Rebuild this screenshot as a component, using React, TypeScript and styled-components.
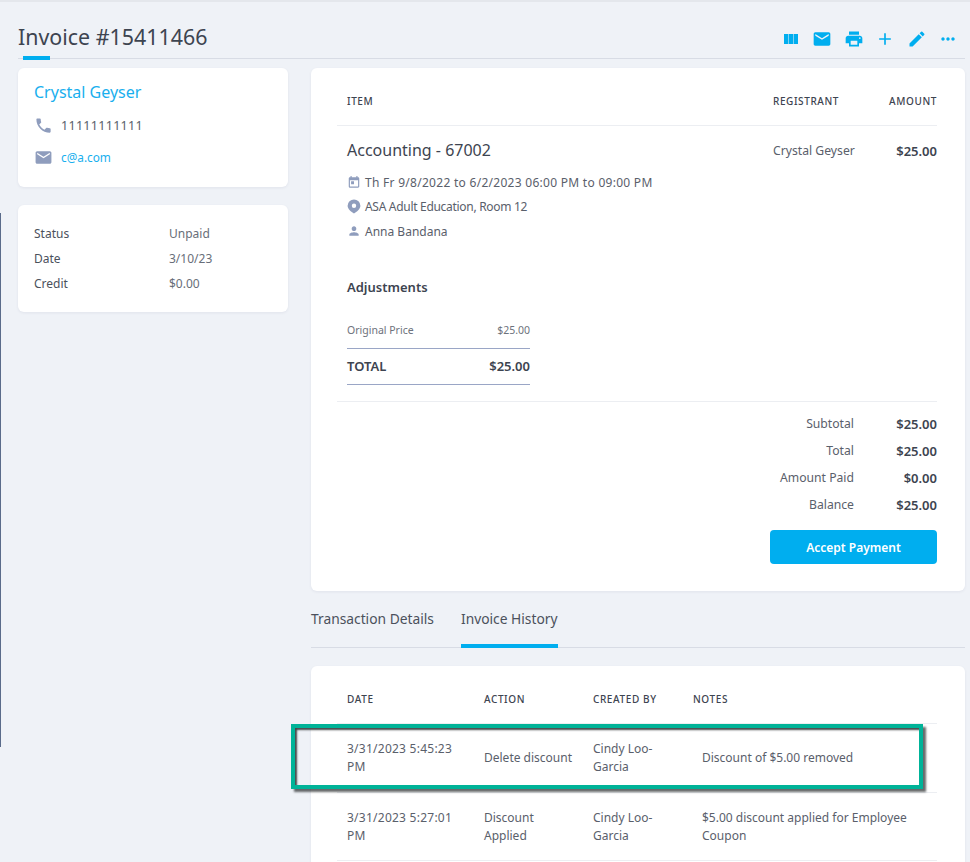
import styled, { createGlobalStyle } from 'styled-components';
import {
  MdEmail,
  MdPrint,
  MdAdd,
  MdEdit,
  MdMoreHoriz,
  MdPhone,
  MdToday,
  MdPerson,
} from 'react-icons/md';

const GlobalStyle = createGlobalStyle`
  html, body {
    margin: 0;
    padding: 0;
    background: #eff2f7;
    font-family: "Noto Sans", "Open Sans", sans-serif;
    color: #3e4550;
  }
  #root {
    height: 862px;
    overflow: hidden;
  }
`;

const Page = styled.div`
  position: relative;
  box-sizing: border-box;
  width: 970px;
  height: 862px;
  overflow: hidden;
  border-top: 2px solid #e4e7ec;
  padding: 0 5px 0 18px;
`;

const SideStripe = styled.div`
  position: absolute;
  left: 0;
  top: 211px;
  width: 1px;
  height: 534px;
  background: #5a6b8a;
`;

const Header = styled.div`
  position: relative;
  display: flex;
  align-items: center;
  justify-content: space-between;
  height: 57px;
  box-sizing: border-box;
  padding: 14px 7px 0 0;
  border-bottom: 1px solid #d8dce5;
`;

const HeaderAccent = styled.div`
  position: absolute;
  left: 5px;
  bottom: -2px;
  width: 27px;
  height: 4px;
  background: #00aeef;
`;

const Title = styled.h1`
  margin: 0;
  font-size: 21.4px;
  font-weight: 400;
  color: #3d4450;
  line-height: 30px;
`;

const Toolbar = styled.div`
  display: flex;
  align-items: center;
  gap: 11.5px;
  margin-top: 3px;
  color: #00aeef;
  font-size: 20px;

  & > svg {
    display: block;
  }
`;

const Columns = styled.div`
  display: grid;
  grid-template-columns: 270px 654px;
  column-gap: 23px;
  margin-top: 9px;
`;

const Stack = styled.div`
  display: flex;
  flex-direction: column;
`;

const Card = styled.div<{ $height: number; $gap?: number }>`
  box-sizing: border-box;
  height: ${(p) => p.$height}px;
  margin-bottom: ${(p) => p.$gap ?? 0}px;
  background: #fff;
  border-radius: 6px;
  box-shadow: 0 1px 3px rgba(60, 70, 100, 0.08);
`;

const ContactCard = styled(Card)`
  padding: 14px 16px;
`;

const ContactName = styled.div`
  font-size: 16px;
  line-height: 21px;
  color: #19afee;
  margin-bottom: 6px;
`;

const ContactRow = styled.div`
  display: flex;
  align-items: center;
  height: 32px;
  gap: 8px;
  font-size: 12.5px;
  letter-spacing: 0.3px;
  color: #5a606b;

  & > svg {
    flex: none;
    color: #8f9dbd;
    font-size: 19px;
  }
`;

const ContactLink = styled.span`
  color: #19afee;
  font-size: 11.8px;
  letter-spacing: 0;
`;

const InfoCard = styled(Card)`
  padding: 16px 16px;
`;

const InfoRow = styled.div`
  display: grid;
  grid-template-columns: 135px 1fr;
  height: 25px;
  align-items: center;
  font-size: 12px;
  color: #4b515c;
`;

const InfoValue = styled.span`
  color: #686e79;
`;

const InvoiceCard = styled(Card)`
  padding: 0 28px 0 26px;
`;

const ItemHead = styled.div`
  display: grid;
  grid-template-columns: 1fr 100px 64px;
  align-items: center;
  height: 58px;
  padding: 8px 0 0 10px;
  box-sizing: border-box;
  border-bottom: 1px solid #eceef2;
`;

const HeadLabel = styled.div<{ $right?: boolean }>`
  font-size: 10px;
  font-weight: 500;
  letter-spacing: 0.6px;
  color: #3d4450;
  text-align: ${(p) => (p.$right ? 'right' : 'left')};
`;

const ItemBody = styled.div`
  display: grid;
  grid-template-columns: 1fr 100px 64px;
  height: 276px;
  box-sizing: border-box;
  padding: 12px 0 0 10px;
  border-bottom: 1px solid #eceef2;
`;

const ItemName = styled.div`
  font-size: 16px;
  line-height: 24px;
  color: #3d4450;
  margin-bottom: 8px;
`;

const ItemMeta = styled.div<{ $spacing?: number }>`
  display: flex;
  align-items: center;
  gap: 4px;
  height: 24.5px;
  font-size: 12px;
  letter-spacing: ${(p) => p.$spacing ?? 0}px;
  color: #5a606b;
`;

const MetaIcon = styled.span`
  display: flex;
  flex: none;
  align-items: center;
  justify-content: center;
  width: 14px;
  color: #8f9dbd;
`;

const SectionTitle = styled.div`
  margin-top: 33px;
  font-size: 13px;
  line-height: 20px;
  font-weight: 600;
  color: #3d4450;
`;

const Adjustments = styled.div`
  width: 183px;
  margin-top: 15px;
`;

const AdjustRow = styled.div<{ $total?: boolean }>`
  display: flex;
  align-items: center;
  justify-content: space-between;
  height: ${(p) => (p.$total ? 36 : 37)}px;
  box-sizing: border-box;
  border-bottom: 1px solid #9aa6c6;
  font-size: ${(p) => (p.$total ? 13 : 10.5)}px;
  font-weight: ${(p) => (p.$total ? 600 : 400)};
  color: ${(p) => (p.$total ? '#3d4450' : '#6d727c')};
`;

const RegistrantCell = styled.div`
  font-size: 12.2px;
  line-height: 26px;
  color: #5a606b;
`;

const AmountCell = styled.div`
  font-size: 13px;
  line-height: 26px;
  font-weight: 600;
  color: #3d4450;
  text-align: right;
`;

const Totals = styled.div`
  display: flex;
  flex-direction: column;
  align-items: flex-end;
  padding-top: 8px;
`;

const TotalRow = styled.div`
  display: grid;
  grid-template-columns: 120px 83px;
  height: 27px;
  align-items: center;
  text-align: right;
`;

const TotalLabel = styled.span`
  font-size: 12.2px;
  color: #5a606b;
`;

const TotalValue = styled.span`
  font-size: 13px;
  font-weight: 600;
  color: #3d4450;
`;

const PayButton = styled.button`
  width: 167px;
  height: 34px;
  margin-top: 12px;
  border: 0;
  border-radius: 4px;
  background: #00aeef;
  color: #fff;
  font-family: inherit;
  font-size: 12px;
  font-weight: 600;
`;

const Tabs = styled.div`
  display: flex;
  gap: 27px;
  height: 57px;
  box-sizing: border-box;
  border-bottom: 1px solid #d8dce5;
`;

const Tab = styled.div<{ $active?: boolean }>`
  box-sizing: border-box;
  height: 57px;
  padding-top: 18px;
  font-size: 13.8px;
  line-height: 20px;
  color: #4b515c;
  border-bottom: ${(p) => (p.$active ? '4px solid #00aeef' : '0')};
`;

const HistoryCard = styled(Card)`
  margin-top: 18px;
  padding: 0 28px 0 26px;
`;

const HistoryRow = styled.div<{ $height: number }>`
  display: grid;
  grid-template-columns: 137px 109px 100px 1fr;
  align-items: center;
  height: ${(p) => p.$height}px;
  box-sizing: border-box;
  padding-left: 10px;
  border-bottom: 1px solid #eceef2;
`;

const HistoryHead = styled(HistoryRow)`
  padding-top: 9px;
`;

const HistoryCell = styled.div<{ $notes?: boolean; $spacing?: number }>`
  font-size: 12px;
  line-height: 18px;
  letter-spacing: ${(p) => p.$spacing ?? 0}px;
  color: #5a606b;
  padding-right: ${(p) => (p.$notes ? 0 : 20)}px;
  margin-left: ${(p) => (p.$notes ? 9 : 0)}px;
`;

const Callout = styled.div`
  position: absolute;
  left: 291px;
  top: 722px;
  width: 632px;
  height: 65px;
  box-sizing: border-box;
  border: 4px solid #00b398;
  box-shadow: inset 2px 2px 2px #45494a, 3px 3px 2px rgba(40, 44, 46, 0.7);
`;

function WeekIcon() {
  return (
    <svg width="20" height="20" viewBox="0 0 20 20" fill="currentColor">
      <rect x="3" y="5" width="4.4" height="10" />
      <rect x="7.9" y="5" width="4.2" height="10" />
      <rect x="12.6" y="5" width="4.4" height="10" />
    </svg>
  );
}

function PinIcon() {
  return (
    <svg width="14" height="15" viewBox="0 0 14 15">
      <path
        fill="currentColor"
        fillRule="evenodd"
        d="M7 .5a6.4 6.4 0 0 1 6.4 6.3c0 3.2-3.6 6.2-6.4 7.7C4.200 13 .6 10 .6 6.800A6.400 6.400 0 0 1 7 .5zm0 4.100a2.200 2.200 0 1 0 0 4.400 2.200 2.200 0 0 0 0-4.400z"
      />
    </svg>
  );
}

const history = [
  {
    date: '3/31/2023 5:45:23 PM',
    action: 'Delete discount',
    by: 'Cindy Loo-Garcia',
    notes: 'Discount of $5.00 removed',
    height: 69,
  },
  {
    date: '3/31/2023 5:27:01 PM',
    action: 'Discount Applied',
    by: 'Cindy Loo-Garcia',
    notes: '$5.00 discount applied for Employee Coupon',
    height: 68,
  },
];

const totals = [
  ['Subtotal', '$25.00'],
  ['Total', '$25.00'],
  ['Amount Paid', '$0.00'],
  ['Balance', '$25.00'],
];

function App() {
  return (
    <>
      <GlobalStyle />
      <Page>
        <SideStripe />
        <Header>
          <Title>Invoice #15411466</Title>
          <HeaderAccent />
          <Toolbar>
            <WeekIcon />
            <MdEmail />
            <MdPrint />
            <MdAdd />
            <MdEdit />
            <MdMoreHoriz />
          </Toolbar>
        </Header>
        <Columns>
          <Stack>
            <ContactCard $height={119} $gap={18}>
              <ContactName>Crystal Geyser</ContactName>
              <ContactRow>
                <MdPhone />
                11111111111
              </ContactRow>
              <ContactRow>
                <MdEmail />
                <ContactLink>c@a.com</ContactLink>
              </ContactRow>
            </ContactCard>
            <InfoCard $height={107}>
              <InfoRow>
                Status<InfoValue>Unpaid</InfoValue>
              </InfoRow>
              <InfoRow>
                Date<InfoValue>3/10/23</InfoValue>
              </InfoRow>
              <InfoRow>
                Credit<InfoValue>$0.00</InfoValue>
              </InfoRow>
            </InfoCard>
          </Stack>
          <Stack>
            <InvoiceCard $height={523}>
              <ItemHead>
                <HeadLabel>ITEM</HeadLabel>
                <HeadLabel>REGISTRANT</HeadLabel>
                <HeadLabel $right>AMOUNT</HeadLabel>
              </ItemHead>
              <ItemBody>
                <div>
                  <ItemName>Accounting - 67002</ItemName>
                  <ItemMeta $spacing={0.28}>
                    <MetaIcon>
                      <MdToday size={15} />
                    </MetaIcon>
                    Th Fr 9/8/2022 to 6/2/2023 06:00 PM to 09:00 PM
                  </ItemMeta>
                  <ItemMeta $spacing={-0.3}>
                    <MetaIcon>
                      <PinIcon />
                    </MetaIcon>
                    ASA Adult Education, Room 12
                  </ItemMeta>
                  <ItemMeta>
                    <MetaIcon>
                      <MdPerson size={20} />
                    </MetaIcon>
                    Anna Bandana
                  </ItemMeta>
                  <SectionTitle>Adjustments</SectionTitle>
                  <Adjustments>
                    <AdjustRow>
                      <span>Original Price</span>
                      <span>$25.00</span>
                    </AdjustRow>
                    <AdjustRow $total>
                      <span>TOTAL</span>
                      <span>$25.00</span>
                    </AdjustRow>
                  </Adjustments>
                </div>
                <RegistrantCell>Crystal Geyser</RegistrantCell>
                <AmountCell>$25.00</AmountCell>
              </ItemBody>
              <Totals>
                {totals.map(([label, value]) => (
                  <TotalRow key={label}>
                    <TotalLabel>{label}</TotalLabel>
                    <TotalValue>{value}</TotalValue>
                  </TotalRow>
                ))}
                <PayButton>Accept Payment</PayButton>
              </Totals>
            </InvoiceCard>
            <Tabs>
              <Tab>Transaction Details</Tab>
              <Tab $active>Invoice History</Tab>
            </Tabs>
            <HistoryCard $height={240}>
              <HistoryHead $height={58}>
                <HeadLabel>DATE</HeadLabel>
                <HeadLabel>ACTION</HeadLabel>
                <HeadLabel>CREATED BY</HeadLabel>
                <HeadLabel>NOTES</HeadLabel>
              </HistoryHead>
              {history.map((row) => (
                <HistoryRow $height={row.height} key={row.date}>
                  <HistoryCell $spacing={0.25}>{row.date}</HistoryCell>
                  <HistoryCell>{row.action}</HistoryCell>
                  <HistoryCell>{row.by}</HistoryCell>
                  <HistoryCell $notes>{row.notes}</HistoryCell>
                </HistoryRow>
              ))}
            </HistoryCard>
          </Stack>
        </Columns>
        <Callout />
      </Page>
    </>
  );
}

export default App;
